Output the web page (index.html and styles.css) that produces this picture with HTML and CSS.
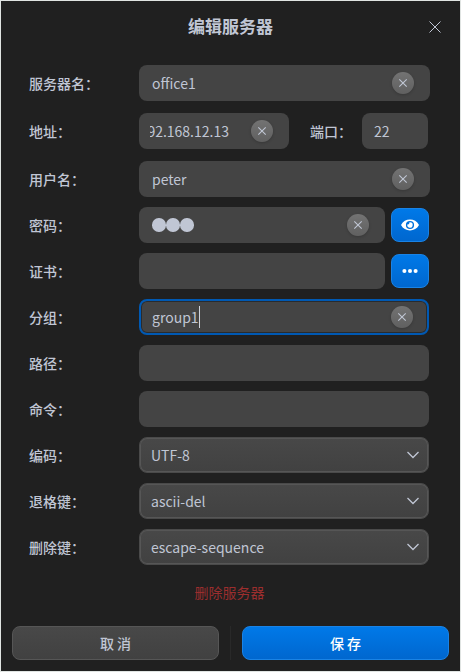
FILE: index.html
```html
<!DOCTYPE html>
<html lang="zh-CN">
<head>
<meta charset="utf-8">
<title>编辑服务器</title>
<link rel="stylesheet" href="styles.css">
</head>
<body>
<svg class="defs" width="0" height="0">
  <symbol id="clear" viewBox="0 0 22 22"><path d="M7.3 7.3l7.4 7.4M14.7 7.3l-7.4 7.4" fill="none" stroke="#c0c6d4" stroke-width="1.1"/></symbol>
  <symbol id="chevron" viewBox="0 0 12 8"><path d="M.5 1L6 6.5 11.500 1" fill="none" stroke="#c0c6d4" stroke-width="1.3"/></symbol>
</svg>
<main class="dialog">
  <header class="titlebar">
    <h1>编辑服务器</h1>
    <svg class="close" viewBox="0 0 12 12"><path d="M.5.5l11 11M11.500.5l-11 11" fill="none" stroke="#c0c6d4" stroke-width="1"/></svg>
  </header>
  <section class="form">
    <div class="row wide"><span class="label">服务器名：</span><div class="field"><span>office1</span><svg class="clear"><use href="#clear"/></svg></div></div>
    <div class="row address"><span class="label">地址：</span><div class="field host"><span class="clip"><span>192.168.12.13</span></span><svg class="clear"><use href="#clear"/></svg></div><span class="label port-label">端口：</span><div class="field port">22</div></div>
    <div class="row wide"><span class="label">用户名：</span><div class="field"><span>peter</span><svg class="clear"><use href="#clear"/></svg></div></div>
    <div class="row"><span class="label">密码：</span><div class="field"><span class="dots"><i></i><i></i><i></i></span><svg class="clear"><use href="#clear"/></svg></div>
      <div class="action"><svg width="18" height="12" viewBox="0 0 18 12"><path fill="#fff" fill-rule="evenodd" d="M0 6C2 2.300 5.200.6 9 .6S16 2.300 18 6c-2 3.700-5.200 5.400-9 5.400S2 9.700 0 6zm9-4.100a4.100 4.100 0 1 0 0 8.200 4.100 4.100 0 0 0 0-8.200z"/><path d="M9 3.300a2.700 2.700 0 1 1-2.600 2A1.500 1.500 0 0 0 8.300 3.400Q8.600 3.300 9 3.300z" fill="#fff"/></svg></div></div>
    <div class="row"><span class="label">证书：</span><div class="field"></div>
      <div class="action"><svg width="16" height="6" viewBox="0 0 16 6" fill="#fff"><circle cx="2.400" cy="3" r="2.050"/><circle cx="8" cy="3" r="2.050"/><circle cx="13.600" cy="3" r="2.050"/></svg></div></div>
    <div class="row"><span class="label">分组：</span><div class="field focused"><span>group1</span><b class="caret"></b><svg class="clear"><use href="#clear"/></svg></div></div>
    <div class="row"><span class="label">路径：</span><div class="field"></div></div>
    <div class="row"><span class="label">命令：</span><div class="field"></div></div>
    <div class="row"><span class="label">编码：</span><div class="field select"><span>UTF-8</span><svg class="chevron"><use href="#chevron"/></svg></div></div>
    <div class="row"><span class="label">退格键：</span><div class="field select"><span>ascii-del</span><svg class="chevron"><use href="#chevron"/></svg></div></div>
    <div class="row"><span class="label">删除键：</span><div class="field select"><span>escape-sequence</span><svg class="chevron"><use href="#chevron"/></svg></div></div>
  </section>
  <div class="delete">删除服务器</div>
  <footer class="footer">
    <div class="button">取 消</div>
    <div class="divider"></div>
    <div class="button primary">保 存</div>
  </footer>
</main>
</body>
</html>
```

FILE: styles.css
```css
* { box-sizing: border-box; }
body {
  margin: 0;
  background: #202020;
  color: #c0c6d4;
  font: 500 14px/20px "Noto Sans CJK SC", sans-serif;
}
.defs { position: absolute; }
.dialog {
  width: 461px;
  height: 672px;
  border: 1px solid #e0e4e2;
  display: flex;
  flex-direction: column;
  overflow: hidden;
}
.titlebar {
  height: 50px;
  flex: none;
  position: relative;
  display: flex;
  align-items: center;
  justify-content: center;
}
h1 { margin: 0; font-size: 17px; line-height: 24px; font-weight: 700; }
.close { position: absolute; right: 19px; top: 20px; width: 12px; height: 12px; }
.form {
  display: flex;
  flex-direction: column;
  gap: 10px;
  padding: 14px 31px 0 28px;
}
.row { display: flex; align-items: center; height: 36px; }
.wide { margin-right: -1px; }
.address { margin: 2px 1px 2px 0; }
.label { width: 110px; flex: none; white-space: nowrap; }
.field {
  flex: 1;
  min-width: 0;
  height: 36px;
  border-radius: 8px;
  background: #444;
  display: flex;
  align-items: center;
  padding: 0 16px 0 13px;
  font-weight: 400;
}
.host { flex: none; width: 150px; padding-left: 11px; }
.clip { width: 79px; overflow: hidden; display: flex; justify-content: flex-end; }
.port-label { width: 52px; margin-left: 21px; }
.port { padding: 0 12px; }
.clear {
  width: 22px;
  height: 22px;
  margin-left: auto;
  border-radius: 50%;
  background: linear-gradient(#737373, #606060);
  box-shadow: 0 1px 3px #0003;
}
.action {
  width: 38px;
  height: 34px;
  margin-left: 6px;
  border-radius: 8px;
  border: 1px solid #1a83e5;
  background: linear-gradient(#0079e8, #0067cf);
  display: flex;
  align-items: center;
  justify-content: center;
}
.dots { display: flex; }
.dots i { width: 13.500px; height: 13.500px; margin-right: .5px; border-radius: 50%; background: #c0c6d4; }
.focused {
  border: 2px solid #0059b3;
  box-shadow: inset 0 0 0 1px #292b2e;
  padding: 0 14px 0 11px;
}
.caret { width: 1px; height: 22px; background: #d0d4dc; }
.select {
  border: 1px solid #4a4a4a;
  box-shadow: inset 0 0 0 1px #565656;
  background: linear-gradient(#484848, #414141);
  padding: 0 9px 0 11px;
}
.chevron { width: 12px; height: 8px; margin-left: auto; }
.delete { margin-top: 17px; padding-right: 2px; text-align: center; color: #9c2e2e; font-weight: 400; }
.footer { margin-top: auto; padding: 0 11px 11px; display: flex; }
.button {
  width: 207px;
  height: 34px;
  border: 1px solid #565656;
  border-radius: 8px;
  background: linear-gradient(#484848, #414141);
  display: flex;
  align-items: center;
  justify-content: center;
}
.divider { width: 1px; height: 34px; margin: 0 11px; background: #292929; }
.primary { border-color: #1a83e5; background: linear-gradient(#0079e8, #0067cf); color: #fff; }
```
